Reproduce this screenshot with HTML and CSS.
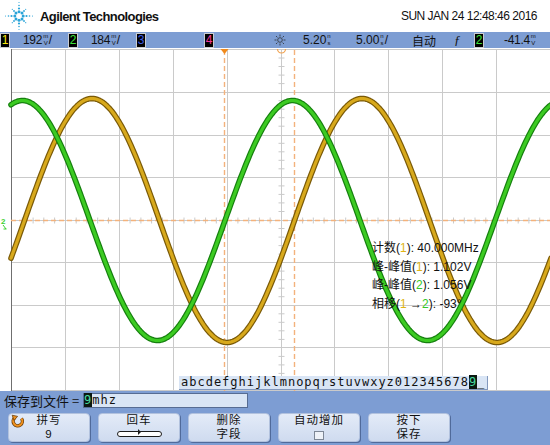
FILE: index.html
```html
<!DOCTYPE html>
<html lang="zh-CN">
<head>
    <meta charset="UTF-8">
    <title>Agilent Technologies</title>
    <link rel="stylesheet" href="styles.css">
    <script src="script.js"></script>
</head>
<body>
<div class="screen">
    <div class="header">
        <svg class="logo" width="36" height="30" viewBox="0 0 36 30">
            <g fill="#2aa4d8" transform="translate(19 15)">
                <circle cx="4.2" cy="0" r="1.5"/><circle cx="-4.2" cy="0" r="1.5"/>
                <circle cx="0" cy="4.2" r="1.5"/><circle cx="0" cy="-4.2" r="1.5"/>
                <circle cx="3" cy="3" r="1.5"/><circle cx="-3" cy="3" r="1.5"/>
                <circle cx="3" cy="-3" r="1.5"/><circle cx="-3" cy="-3" r="1.5"/>
                <circle cx="7.5" cy="0" r="1.1"/><circle cx="10.5" cy="0" r="0.8"/><circle cx="13.5" cy="0" r="0.55"/>
                <circle cx="-7.5" cy="0" r="1.1"/><circle cx="-10.5" cy="0" r="0.8"/><circle cx="-13.5" cy="0" r="0.55"/>
                <circle cx="0" cy="7.5" r="1.1"/><circle cx="0" cy="10.5" r="0.8"/><circle cx="0" cy="13.5" r="0.55"/>
                <circle cx="0" cy="-7.5" r="1.1"/><circle cx="0" cy="-10.5" r="0.8"/><circle cx="0" cy="-13.5" r="0.55"/>
                <circle cx="5" cy="5" r="0.9"/><circle cx="6.7" cy="6.7" r="0.6"/>
                <circle cx="-5" cy="5" r="0.9"/><circle cx="-6.7" cy="6.7" r="0.6"/>
                <circle cx="5" cy="-5" r="0.9"/><circle cx="6.7" cy="-6.7" r="0.6"/>
                <circle cx="-5" cy="-5" r="0.9"/><circle cx="-6.7" cy="-6.7" r="0.6"/>
            </g>
        </svg>
        <span class="brand">Agilent Technologies</span>
        <span class="clock">SUN JAN 24 12:48:46 2016</span>
    </div>

    <div class="statusbar">
        <div class="chan"><span class="num c1">1</span><span class="val">192<span class="unit">m<br>V</span>/</span></div>
        <div class="chan"><span class="num c2">2</span><span class="val">184<span class="unit">m<br>V</span>/</span></div>
        <div class="chan"><span class="num c3">3</span></div>
        <div class="chan"><span class="num c4">4</span></div>
        <span class="sun">
            <svg width="12" height="12" viewBox="0 0 12 12">
                <circle cx="6" cy="6" r="2.3" fill="none" stroke="#3c4452" stroke-width="1"/>
                <path d="M6 0.5v2M6 9.5v2M0.5 6h2M9.5 6h2M2 2l1.4 1.4M8.6 8.6l1.4 1.4M10 2l-1.4 1.4M3.4 8.6l-1.4 1.4" stroke="#3c4452" stroke-width="1"/>
            </svg>
        </span>
        <span class="delay">5.20<span class="unit">n<br>s</span></span>
        <span class="tdiv">5.00<span class="unit">n<br>s</span>/</span>
        <span class="mode">自动</span>
        <span class="slope">ƒ</span>
        <span class="num c2">2</span>
        <span class="level">-41.4<span class="unit">m<br>V</span></span>
    </div>

    <div class="scope">
        <svg class="grid" width="550" height="343" viewBox="0 48 550 343">
            <path class="lines" d="M65.5 49V391M119.5 49V391M173.5 49V391M227.5 49V391M281.5 49V391M334.5 49V391M388.5 49V391M442.5 49V391M496.5 49V391
                M11 49.5H550M11 92.5H550M11 135.5H550M11 177.5H550M11 220.5H550M11 262.5H550M11 305.5H550M11 347.5H550M11 390.5H550"/>
            <path class="ticks"/>
            <path class="border" d="M11.5 49V391"/>
            <path class="cursor" d="M224.5 50V391M294.5 50V391M11 220.5H550"/>
            <polygon class="marker" points="220.5,49 228.5,49 224.5,54"/>
            <path class="delaymark" d="M277.5 49a4 4 0 0 0 8 0"/>
            <text class="gnd" x="1" y="224">2</text>
            <path class="gndarrow" d="M3 225l3 4M3.5 229h3"/>
            <g class="trace ch1"><path class="edge"/><path class="core"/></g>
            <g class="trace ch2"><path class="edge"/><path class="core"/></g>
        </svg>

        <div class="meas">
            <div>计数(<b class="y">1</b>): 40.000MHz</div>
            <div>峰-峰值(<b class="y">1</b>): 1.102V</div>
            <div>峰-峰值(<b class="g">2</b>): 1.056V</div>
            <div>相移(<b class="y">1</b> →<b class="g">2</b>): -93°</div>
        </div>

        <div class="keys">abcdefghijklmnopqrstuvwxyz012345678<span class="sel">9</span>_</div>
    </div>

    <div class="panel">
        <div class="fileline">
            <span class="label">保存到文件 =</span>
            <span class="field"><span class="sel">9</span>mhz</span>
        </div>
        <div class="softkeys">
            <div class="key">
                <svg class="spin" width="16" height="15" viewBox="0 0 16 15">
                    <path d="M5 3.5A4.6 4.6 0 1 0 11.5 4.5" fill="none" stroke="#6b3f0c" stroke-width="3.4"/>
                    <path d="M5 3.5A4.6 4.6 0 1 0 11.5 4.5" fill="none" stroke="#f2921e" stroke-width="2"/>
                    <polygon points="2.2,1.2 7.6,2.4 4,6.4" fill="#f2921e" stroke="#6b3f0c" stroke-width="0.8"/>
                </svg>
                <span>拼写</span>
                <span>9</span>
            </div>
            <div class="key">
                <span>回车</span>
                <span class="slider"></span>
            </div>
            <div class="key">
                <span>删除</span>
                <span>字段</span>
            </div>
            <div class="key">
                <span>自动增加</span>
                <span class="check"></span>
            </div>
            <div class="key">
                <span>按下</span>
                <span>保存</span>
            </div>
        </div>
    </div>
</div>
</body>
</html>
```

FILE: styles.css
```css
body {
    margin: 0;
    font-family: "Liberation Sans", "Noto Sans CJK SC", sans-serif;
    color: #111;
}
.screen {
    width: 550px;
    height: 445px;
    overflow: hidden;
    background: #fff;
}

/* header */
.header {
    height: 32px;
    display: flex;
    align-items: center;
}
.logo {
    display: block;
}
.brand {
    margin-left: 4px;
    font-size: 13px;
    font-weight: bold;
    letter-spacing: -0.6px;
}
.clock {
    margin-left: auto;
    margin-right: 13px;
    font-size: 12px;
    letter-spacing: -0.5px;
}

/* status bar */
.statusbar {
    height: 16px;
    background: #7d9dd3;
    display: flex;
    align-items: center;
    font-size: 12px;
    white-space: nowrap;
}
.chan {
    width: 68px;
    display: flex;
    align-items: center;
}
.num {
    display: inline-block;
    width: 10px;
    height: 15px;
    box-sizing: border-box;
    background: #000;
    border: 1px solid #c9ccd2;
    font-size: 12px;
    line-height: 13px;
    text-align: center;
}
.c1 { color: #f5ea10; }
.c2 { color: #3ee23a; }
.c3 { color: #3f5ee6; }
.c4 { color: #f0369a; }
.val {
    margin-left: 13px;
    letter-spacing: -0.3px;
}
.unit {
    display: inline-block;
    font-size: 6px;
    line-height: 7px;
    text-align: center;
    vertical-align: middle;
    margin: 0 1px;
}
.sun {
    width: 29px;
    margin-left: 2px;
    display: flex;
}
.delay { width: 53px; }
.tdiv { width: 56px; }
.mode {
    width: 42px;
    font-family: "Noto Sans CJK SC", sans-serif;
    font-size: 12px;
}
.slope {
    width: 20px;
    font-family: "Liberation Serif", serif;
    font-style: italic;
    font-size: 13px;
}
.level {
    margin-left: 20px;
    letter-spacing: -0.3px;
}

/* graticule */
.scope {
    position: relative;
    height: 343px;
}
.grid {
    display: block;
}
.lines {
    stroke: #cacaca;
    stroke-width: 1;
    fill: none;
}
.ticks {
    stroke: #cacaca;
    stroke-width: 1;
}
.border {
    stroke: #6f6f6f;
    stroke-width: 1;
}
.cursor {
    stroke: #f3b27c;
    stroke-width: 1.4;
    stroke-dasharray: 5 3;
    fill: none;
}
.marker {
    fill: #f08a1c;
}
.delaymark {
    fill: none;
    stroke: #f2a24e;
    stroke-width: 1.2;
}
.gnd {
    font-size: 8px;
    font-weight: bold;
    fill: #3cd030;
}
.gndarrow {
    stroke: #3cd030;
    stroke-width: 1;
    fill: none;
}
.trace path {
    fill: none;
    stroke-linejoin: round;
    stroke-linecap: round;
}
.ch1 .edge { stroke: #7a5a08; stroke-width: 5.6; }
.ch1 .core { stroke: #d8a91c; stroke-width: 3.2; }
.ch2 .edge { stroke: #16800f; stroke-width: 5.6; }
.ch2 .core { stroke: #3ccb22; stroke-width: 3.2; }

.meas {
    position: absolute;
    left: 372px;
    top: 191px;
    font-size: 12px;
    line-height: 18.7px;
    white-space: nowrap;
}
.meas b {
    font-weight: normal;
}
.meas .y { color: #e0b414; }
.meas .g { color: #34c826; }

.keys {
    position: absolute;
    left: 179px;
    top: 328px;
    width: 309px;
    height: 14px;
    box-sizing: border-box;
    padding-left: 2px;
    background: #d9e5f5;
    border-right: 1px solid #8298bd;
    border-bottom: 1px solid #8298bd;
    font-family: "DejaVu Sans Mono", monospace;
    font-size: 12px;
    line-height: 13px;
    letter-spacing: 1px;
    white-space: nowrap;
}
.sel {
    background: #0b1812;
    color: #47dca0;
}

/* bottom panel */
.panel {
    height: 54px;
    background: #7d9dd3;
}
.fileline {
    display: flex;
    align-items: center;
    padding: 2px 0 0 4px;
    height: 15px;
}
.label {
    width: 79px;
    font-family: "Noto Sans CJK SC", sans-serif;
    font-size: 13px;
    line-height: 15px;
    white-space: nowrap;
}
.field {
    width: 165px;
    height: 15px;
    box-sizing: border-box;
    background: #d9e5f5;
    border: 1px solid #566c93;
    font-family: "DejaVu Sans Mono", monospace;
    font-size: 12px;
    line-height: 13px;
    letter-spacing: 1px;
}
.softkeys {
    display: flex;
    gap: 8px;
    margin-top: 5px;
    padding-left: 8px;
}
.key {
    position: relative;
    width: 82px;
    height: 29px;
    box-sizing: border-box;
    border: 1px solid #b2c2de;
    border-radius: 4px;
    background: linear-gradient(#e3ebf8, #cfdbef);
    box-shadow: 1px 1px 0 #506a9a;
    display: flex;
    flex-direction: column;
    align-items: center;
    font-family: "Liberation Sans", "Noto Sans CJK SC", sans-serif;
    font-size: 11.5px;
    line-height: 13.5px;
    letter-spacing: 1px;
}
.spin {
    position: absolute;
    left: 1px;
    top: 0;
}
.slider {
    position: relative;
    width: 45px;
    height: 6px;
    box-sizing: border-box;
    margin-top: 3px;
    border: 1px solid #1c1c1c;
    border-radius: 3px;
    background: #fff;
}
.slider::after {
    content: "";
    position: absolute;
    left: 20px;
    top: -3px;
    width: 0;
    height: 0;
    border-top: 3px solid transparent;
    border-bottom: 3px solid transparent;
    border-left: 3px solid #1c1c1c;
}
.check {
    width: 10px;
    height: 9px;
    box-sizing: border-box;
    margin-top: 3px;
    border: 1px solid #7d8796;
    background: #eef2f8;
}
```

FILE: script.js
```js
window.onload = function () {

    // two channels: x of a crest and amplitude, in screen pixels
    var traces = [
        { sel: '.ch1', peak: 92, amp: 122 },
        { sel: '.ch2', peak: 22.5, amp: 120 }
    ];
    var period = 270;

    for (var i = 0; i < traces.length; i++) {
        var d = '';
        for (var x = 11; x <= 551; x += 1.5) {
            var y = 220.5 - traces[i].amp * Math.cos(2 * Math.PI * (x - traces[i].peak) / period);
            d += (x == 11 ? 'M' : 'L') + x + ' ' + y.toFixed(1);
        }
        var paths = document.querySelectorAll(traces[i].sel + ' path');
        for (var j = 0; j < paths.length; j++) {
            paths[j].setAttribute('d', d);
        }
    }

    // minor ticks on the centre lines
    var t = '';
    for (var k = 1; k < 40; k++) {
        if (k % 5) t += 'M278.5 ' + (49.5 + k * 341 / 40).toFixed(1) + 'h6';
    }
    for (var n = 1; n < 50; n++) {
        if (n % 5) t += 'M' + (11.5 + n * 539 / 50).toFixed(1) + ' 217.5v6';
    }
    document.querySelector('.ticks').setAttribute('d', t);
}
```
